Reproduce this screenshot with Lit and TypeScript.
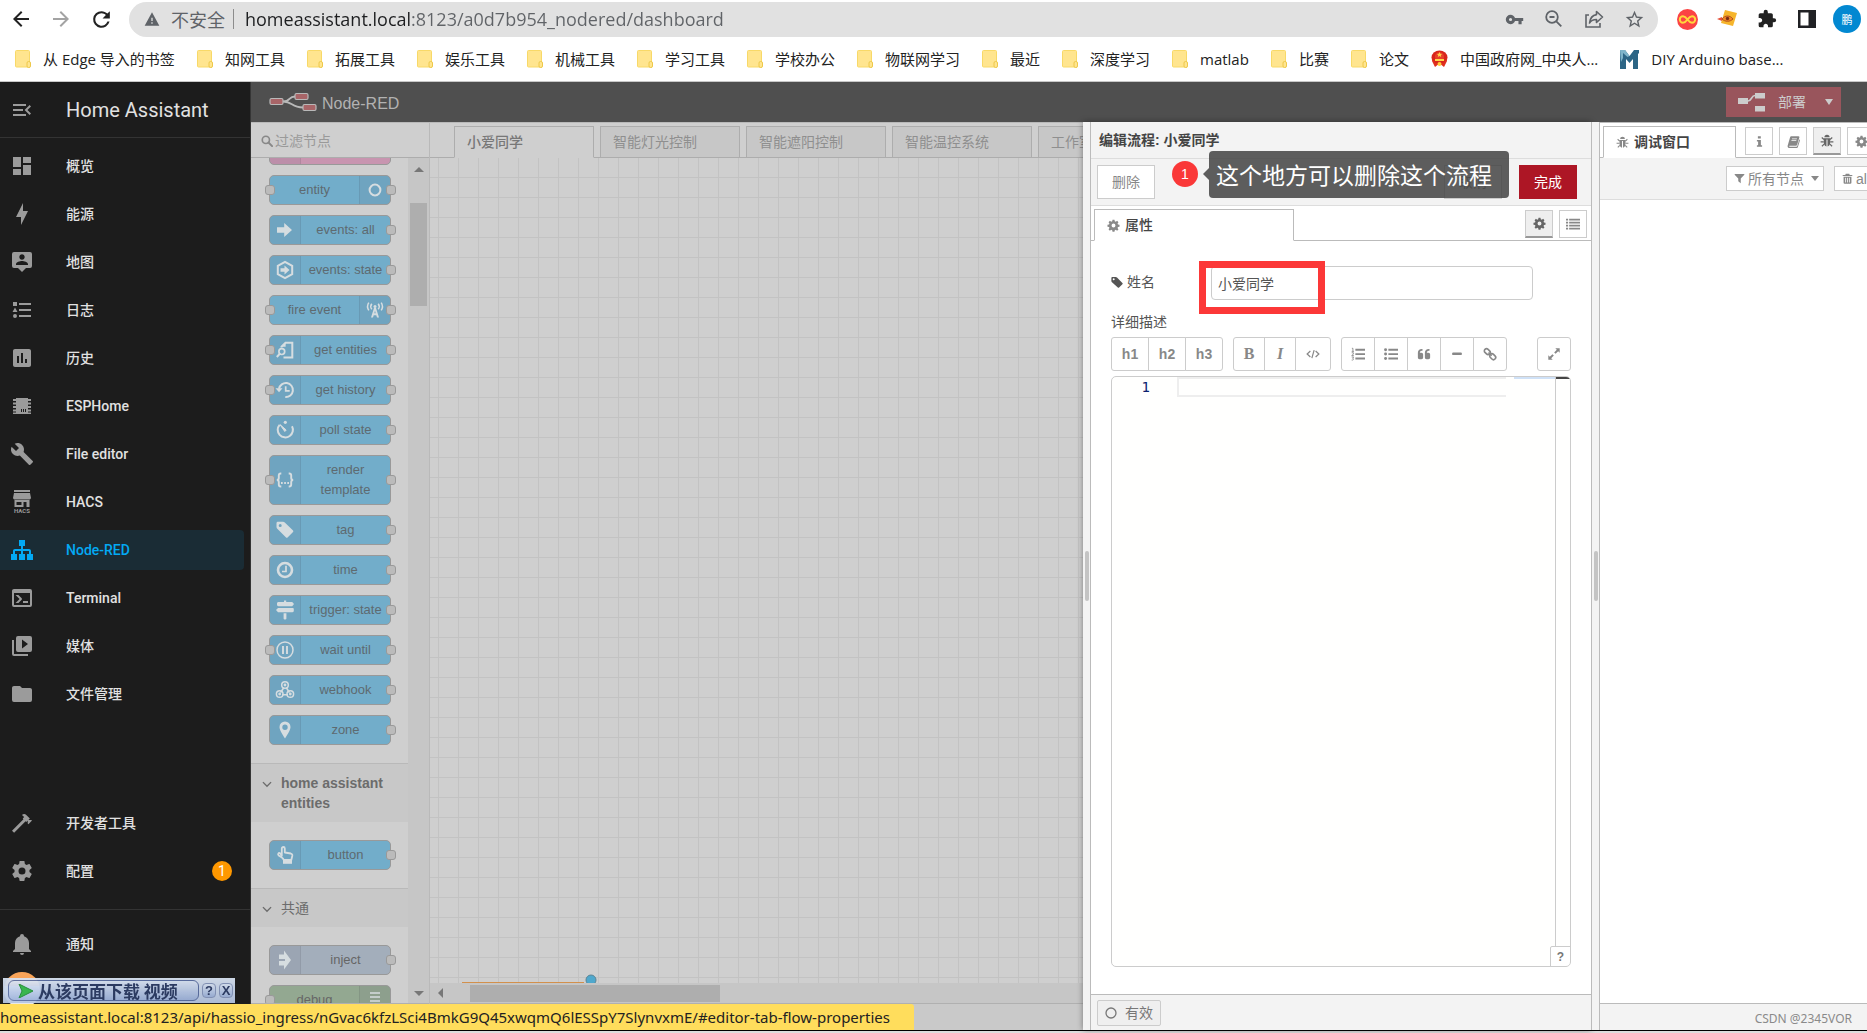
import { LitElement, html, css, svg, nothing, TemplateResult } from "lit";
import { customElement } from "lit/decorators.js";
import { classMap } from "lit/directives/class-map.js";

/* ---------- icons ---------- */

const MDI: Record<string, string> = {
  menuOpen: "M21,15.61L19.59,17L14.58,12L19.59,7L21,8.39L17.44,12L21,15.61M3,6H16V8H3V6M3,13V11H13V13H3M3,18V16H16V18H3Z",
  dashboard: "M13,3V9H21V3M13,21H21V11H13M3,21H11V15H3M3,13H11V3H3V13Z",
  bolt: "M11 15H6L13 1V9H18L11 23V15Z",
  map: "M20,2H4A2,2 0 0,0 2,4V16A2,2 0 0,0 4,18H8L12,22L16,18H20A2,2 0 0,0 22,16V4A2,2 0 0,0 20,2M12,4.3C13.5,4.3 14.7,5.5 14.7,7C14.7,8.5 13.5,9.7 12,9.7C10.5,9.7 9.3,8.5 9.3,7C9.3,5.5 10.5,4.3 12,4.3M18,15H6V14.1C6,12.1 10,11 12,11C14,11 18,12.1 18,14.1V15Z",
  log: "M5,9.5L7.5,14H2.5L5,9.5M3,4H7V8H3V4M5,20A2,2 0 0,0 7,18A2,2 0 0,0 5,16A2,2 0 0,0 3,18A2,2 0 0,0 5,20M9,5V7H21V5H9M9,19H21V17H9V19M9,13H21V11H9V13Z",
  chart: "M9 17H7V10H9V17M13 17H11V7H13V17M17 17H15V13H17V17M19 3H5C3.89 3 3 3.89 3 5V19C3 20.1 3.9 21 5 21H19C20.1 21 21 20.1 21 19V5C21 3.9 20.1 3 19 3Z",
  chip: "M6 4H18V5H21V7H18V8.5H21V10.5H18V12H21V14H18V15.500H21V17.500H18V18.500H21V20H3V18.500H6V17.500H3V15.500H6V14H3V12H6V10.500H3V8.500H6V7H3V5H6ZM11 15V18H12V15ZM13 15V18H14V15ZM15 15V18H16V15Z",
  wrench: "M22.7,19L13.6,9.9C14.5,7.6 14,4.9 12.1,3C10.1,1 7.1,0.6 4.7,1.7L9,6L6,9L1.6,4.7C0.4,7.1 0.9,10.1 2.9,12.1C4.8,14 7.5,14.5 9.8,13.6L18.9,22.7C19.3,23.1 19.9,23.1 20.3,22.7L22.6,20.4C23.1,20 23.1,19.3 22.7,19Z",
  sitemap: "M9,2V8H11V11H5C3.89,11 3,11.89 3,13V16H1V22H7V16H5V13H11V16H9V22H15V16H13V13H19V16H17V22H23V16H21V13C21,11.89 20.11,11 19,11H13V8H15V2H9Z",
  console: "M20,19V7H4V19H20M20,3A2,2 0 0,1 22,5V19A2,2 0 0,1 20,21H4A2,2 0 0,1 2,19V5C2,3.89 2.9,3 4,3H20M13,17V15H18V17H13M9.58,13L5.57,9H8.4L11.7,12.3C12.09,12.69 12.09,13.33 11.7,13.72L8.42,17H5.59L9.58,13Z",
  media: "M4,6H2V20A2,2 0 0,0 4,22H18V20H4V6M20,2H8A2,2 0 0,0 6,4V16A2,2 0 0,0 8,18H20A2,2 0 0,0 22,16V4A2,2 0 0,0 20,2M12,14.5V5.5L18,10L12,14.5Z",
  folder: "M10,4H4C2.89,4 2,4.89 2,6V18A2,2 0 0,0 4,20H20A2,2 0 0,0 22,18V8C22,6.89 21.1,6 20,6H12L10,4Z",
  hammer: "M2,19.63L13.43,8.2L12.72,7.5L14.14,6.07L12,3.89C13.2,2.7 15.09,2.7 16.27,3.89L19.87,7.5L18.45,8.91H21.29L22,9.62L18.45,13.21L17.74,12.5V9.62L16.27,11.04L15.56,10.33L4.13,21.76L2,19.63Z",
  cog: "M12,15.5A3.5,3.5 0 0,1 8.5,12A3.5,3.5 0 0,1 12,8.5A3.5,3.5 0 0,1 15.5,12A3.5,3.5 0 0,1 12,15.5M19.43,12.97C19.47,12.65 19.5,12.33 19.5,12C19.5,11.67 19.47,11.34 19.43,11L21.54,9.37C21.73,9.22 21.78,8.95 21.66,8.73L19.66,5.27C19.54,5.05 19.27,4.96 19.05,5.05L16.56,6.05C16.04,5.66 15.5,5.32 14.87,5.07L14.5,2.42C14.46,2.18 14.25,2 14,2H10C9.75,2 9.54,2.18 9.5,2.42L9.13,5.07C8.5,5.32 7.96,5.66 7.44,6.05L4.95,5.05C4.73,4.96 4.46,5.05 4.34,5.27L2.34,8.73C2.21,8.95 2.27,9.22 2.46,9.37L4.57,11C4.53,11.34 4.5,11.67 4.5,12C4.5,12.33 4.53,12.65 4.57,12.97L2.46,14.63C2.27,14.78 2.21,15.05 2.34,15.27L4.34,18.73C4.46,18.95 4.73,19.03 4.95,18.95L7.44,17.94C7.96,18.34 8.5,18.68 9.13,18.93L9.5,21.58C9.54,21.82 9.75,22 10,22H14C14.25,22 14.46,21.82 14.5,21.58L14.87,18.93C15.5,18.67 16.04,18.34 16.56,17.94L19.05,18.95C19.27,19.03 19.54,18.95 19.66,18.73L21.66,15.27C21.78,15.05 21.73,14.78 21.54,14.63L19.43,12.97Z",
  bell: "M21,19V20H3V19L5,17V11C5,7.9 7.03,5.17 10,4.29C10,4.19 10,4.1 10,4A2,2 0 0,1 12,2A2,2 0 0,1 14,4C14,4.1 14,4.19 14,4.29C16.97,5.17 19,7.9 19,11V17L21,19M14,21A2,2 0 0,1 12,23A2,2 0 0,1 10,21",
  puzzle: "M20.5,11H19V7C19,5.89 18.1,5 17,5H13V3.5A2.5,2.5 0 0,0 10.5,1A2.5,2.5 0 0,0 8,3.5V5H4A2,2 0 0,0 2,7V10.8H3.5C5,10.8 6.2,12 6.2,13.5C6.2,15 5,16.2 3.5,16.2H2V20A2,2 0 0,0 4,22H7.8V20.5C7.8,19 9,17.8 10.5,17.8C12,17.8 13.2,19 13.2,20.5V22H17A2,2 0 0,0 19,20V16H20.5A2.5,2.5 0 0,0 23,13.5A2.5,2.5 0 0,0 20.5,11Z",
  reload: "M17.65 6.35C16.2 4.9 14.21 4 12 4A8 8 0 1 0 19.73 14H17.65A6 6 0 1 1 12 6c1.66 0 3.14.69 4.22 1.78L13 11h7V4z",
  back: "M20 11H7.83l5.59-5.59L12 4l-8 8 8 8 1.41-1.41L7.83 13H20z",
  forward: "M4 11H16.17l-5.59-5.59L12 4l8 8-8 8-1.410-1.410L16.17 13H4z",
  star: "M12,15.39L8.24,17.66L9.23,13.38L5.91,10.5L10.29,10.13L12,6.09L13.71,10.13L18.09,10.5L14.77,13.38L15.76,17.66M22,9.24L14.81,8.63L12,2L9.19,8.63L2,9.24L7.45,13.97L5.82,21L12,17.27L18.18,21L16.54,13.97L22,9.24Z",
  key: "M7,14A2,2 0 0,1 5,12A2,2 0 0,1 7,10A2,2 0 0,1 9,12A2,2 0 0,1 7,14M12.65,10C11.83,7.67 9.61,6 7,6A6,6 0 0,0 1,12A6,6 0 0,0 7,18C9.61,18 11.83,16.33 12.65,14H17V18H21V14H23V10H12.65Z",
  warn: "M12 2L1 22H23L12 2M11 10H13V15H11V10M11 17H13V19H11V17Z",
};

const mdi = (name: string, size = 24) => html`
  <svg class="ic" width=${size} height=${size} viewBox="0 0 24 24" aria-hidden="true">
    <path fill="currentColor" fill-rule="evenodd" d=${MDI[name]}></path>
  </svg>`;

/* Small glyphs on a 16-unit grid. */
const GLYPH: Record<string, TemplateResult> = {
  search: svg`<circle cx="6.500" cy="6.500" r="4.800" fill="none" stroke="currentColor" stroke-width="2.200"/><path d="M10 10l4.800 4.800" stroke="currentColor" stroke-width="2.600" stroke-linecap="round"/>`,
  gear: svg`<path fill="currentColor" fill-rule="evenodd" d="M6.800 1h2.400l.4 1.900 1.200.5 1.700-1.100 1.600 1.700-1.100 1.600.5 1.200 1.900.4v2.300l-1.900.4-.5 1.200 1.100 1.700-1.700 1.600-1.600-1.100-1.200.5-.4 1.900H6.800l-.4-1.900-1.200-.5-1.700 1.100-1.600-1.700L3 11.100l-.5-1.200-1.900-.4V7.200l1.900-.4.5-1.200L1.900 3.900l1.700-1.600 1.600 1.100 1.200-.5zM8 5.600a2.400 2.400 0 100 4.800 2.400 2.400 0 000-4.800z"/>`,
  list: svg`<path fill="currentColor" d="M0 2h2.400v2H0zM3.600 2H16v2H3.600zM0 5.400h2.400v2H0zM3.600 5.400H16v2H3.600zM0 8.800h2.400v2H0zM3.600 8.800H16v2H3.600zM0 12.200h2.400v2H0zM3.600 12.200H16v2H3.600z"/>`,
  tag: svg`<path fill="currentColor" fill-rule="evenodd" d="M.5 2.500a1.200 1.200 0 011.200-1.200h4.600a2.600 2.600 0 011.700.7l7.200 7.200a1.200 1.200 0 010 1.700l-4.400 4.400a1.200 1.200 0 01-1.700 0L1.300 8.200A2.600 2.600 0 01.5 6.500zM3.600 3a1.300 1.300 0 100 2.600A1.300 1.300 0 003.600 3z"/>`,
  bug: svg`<path fill="currentColor" d="M5 3.800a3 3 0 016 0zM4.300 4.800h7.400v4.700c0 2.700-1.500 4.700-3.100 4.900V6.300H7.400v8.100c-1.600-.2-3.100-2.200-3.100-4.900z"/><path d="M4.500 6.300L2 4M4.300 9H.7M4.700 11.500L2.200 14M11.500 6.300L14 4M11.700 9h3.600M11.300 11.500l2.500 2.500" stroke="currentColor" stroke-width="1.300" fill="none"/>`,
  info: svg`<path fill="currentColor" d="M6 1.500h3.600v2.800H6zM4.800 6h4.900v6.500h1.500v2H4.800v-2h1.500V8H4.800z"/>`,
  book: svg`<path fill="currentColor" d="M5.500 1.500H14c1 0 1.500.7 1.200 1.600l-2.700 9c-.2.800-.8 1.200-1.600 1.200H3.600c-.7 0-1 .3-.8.700.1.300.5.400.9.400h7.800c.6 0 1-.3 1.200-.9l2.500-8.200c.6.400.8 1 .6 1.700l-2.400 7.800c-.3.900-1 1.500-2 1.500H3.300C1.600 16.300.3 14.800.8 13.300L3.700 3.100c.3-1 .9-1.600 1.800-1.600zM6.300 4.300L6 5.200h6l.3-.9zM5.600 6.600l-.3.900h6l.3-.9z" fill-rule="evenodd"/>`,
  filter: svg`<path fill="currentColor" d="M1 1.500h14v1L9.800 8v7L6.200 12V8L1 2.500z"/>`,
  trash: svg`<path fill="currentColor" fill-rule="evenodd" d="M5.500 1h5l.8 1.800H15V4.500H1V2.800h3.700zM2.300 5.300h11.400V14a1.500 1.500 0 01-1.500 1.500H3.800A1.500 1.500 0 012.300 14zM4.700 7v6.700h1.200V7zM7.400 7v6.700h1.200V7zM10.100 7v6.700h1.200V7z"/>`,
  ol: svg`<path fill="currentColor" d="M5 2h11v2.200H5zM5 7h11v2.200H5zM5 12h11v2.200H5z"/><path d="M1 1.500h1.200v3.500M.8 5h2.600M.8 6.600h2v1.300L.9 9.800h2.300M.8 11.400h2.200l-1 1.600c1.500.2 1.200 2.200-1.200 1.900" fill="none" stroke="currentColor"/>`,
  ul: svg`<path fill="currentColor" d="M5 2h11v2.200H5zM5 7h11v2.200H5zM5 12h11v2.200H5z"/><circle cx="1.800" cy="3.100" r="1.700" fill="currentColor"/><circle cx="1.800" cy="8.100" r="1.700" fill="currentColor"/><circle cx="1.800" cy="13.100" r="1.700" fill="currentColor"/>`,
  quote: svg`<path fill="currentColor" d="M1 6.500C1 4 2.800 2.200 5.500 2.200h.8v2h-.8C4.200 4.200 3.300 5 3.200 6.700H5c1.200 0 2 .8 2 2V12c0 1.200-.8 2-2 2H3c-1.200 0-2-.8-2-2zM9 6.500c0-2.500 1.800-4.300 4.500-4.300h.8v2h-.8c-1.300 0-2.200.8-2.300 2.500H13c1.200 0 2 .8 2 2V12c0 1.200-.8 2-2 2h-2c-1.200 0-2-.8-2-2z"/>`,
  minus: svg`<rect x="2.500" y="6.200" width="11" height="3" rx="1" fill="currentColor"/>`,
  link: svg`<g fill="none" stroke="currentColor" stroke-width="1.900"><rect x="1.200" y="2.800" width="7.400" height="5" rx="2.500" transform="rotate(45 4.900 5.300)"/><rect x="7.400" y="8.600" width="7.400" height="5" rx="2.500" transform="rotate(45 11.100 11.100)"/></g><path d="M6.300 6.300l3.600 3.600" stroke="currentColor" stroke-width="1.600"/>`,
  expand: svg`<path fill="currentColor" d="M9.500 1.500h5v5l-1.700-1.700-3 3-1.600-1.600 3-3zM6.500 14.500h-5v-5l1.700 1.700 3-3 1.600 1.600-3 3z"/>`,
  code: svg`<path d="M5 4.500L1.300 8 5 11.500M11 4.500L14.700 8 11 11.500M9.300 3.500L6.700 12.800" fill="none" stroke="currentColor" stroke-width="1.400"/>`,
  chevron: svg`<path d="M1.500 5L8 11.500 14.500 5" fill="none" stroke="currentColor" stroke-width="2.200"/>`,
};

const glyph = (name: string, size = 14) => html`
  <svg class="ic" width=${size} height=${size} viewBox="0 0 16 16" aria-hidden="true">${GLYPH[name]}</svg>`;

/* Icons of the palette nodes, on a 20-unit grid. */
const NODE_ICON: Record<string, TemplateResult> = {
  ring: svg`<circle cx="10" cy="10" r="5.400" fill="none" stroke="currentColor" stroke-width="2"/>`,
  arrow: svg`<path fill="currentColor" d="M2 7.200h7.200V3L17 10l-7.800 7V12.800H2z"/>`,
  hex: svg`<path d="M10 1.800l7.200 4.100v8.200L10 18.200l-7.200-4.100V5.900z" fill="none" stroke="currentColor" stroke-width="2"/><path fill="currentColor" d="M5.500 8.300h4V5.600l5 4.400-5 4.400v-2.700h-4z"/>`,
  tower: svg`<path fill="currentColor" d="M9 8h2l3 9.500h-2l-.7-2.300H8.700L8 17.500H6zM9.300 13.300h1.400L10 10.700z" fill-rule="evenodd"/><circle cx="10" cy="6.600" r="1.500" fill="currentColor"/><path d="M6.800 3.800a4.500 4.500 0 000 5.500M13.200 3.800a4.500 4.500 0 010 5.500M3.800 2.700a7 7 0 000 7.700M16.200 2.700a7 7 0 010 7.700" fill="none" stroke="currentColor" stroke-width="1.500"/>`,
  doc: svg`<path d="M6.500 7.500V6.700l4-4h6.800V17.500H8.500" fill="none" stroke="currentColor" stroke-width="2"/><path d="M6.500 6.800l4.100-4.400v4.400z" fill="currentColor"/><circle cx="6.800" cy="11.600" r="2.900" fill="none" stroke="currentColor" stroke-width="1.700"/><path d="M4.800 13.800L1.800 17" stroke="currentColor" stroke-width="2"/>`,
  history: svg`<path d="M4 8.800A7 7 0 1110.300 17" fill="none" stroke="currentColor" stroke-width="2"/><path fill="currentColor" d="M.5 8.300h7L4 12.300z"/><path d="M10.700 6.300v4.500h4" fill="none" stroke="currentColor" stroke-width="1.700"/>`,
  timer: svg`<path d="M4.600 4.800A7.600 7.600 0 1017 6.200" fill="none" stroke="currentColor" stroke-width="2"/><path d="M5 4.600l6.200 5.400-1.400 1.500z" fill="currentColor" stroke="currentColor"/><circle cx="10.300" cy="2.300" r="1.600" fill="currentColor"/>`,
  braces: svg`<path d="M6.300 3.500H5.700c-1.500 0-1.900.7-1.900 2V8c0 1.200-.6 2-2 2 1.400 0 2 .8 2 2v2.500c0 1.300.4 2 1.900 2h.6M13.700 3.500h.6c1.500 0 1.900.7 1.900 2V8c0 1.200.6 2 2 2-1.400 0-2 .8-2 2v2.500c0 1.300-.4 2-1.900 2h-.6" fill="none" stroke="currentColor" stroke-width="1.900"/><path d="M6 13h1.700M9.200 13h1.700M12.300 13H14" stroke="currentColor" stroke-width="1.800"/>`,
  tag: svg`<path fill="currentColor" fill-rule="evenodd" d="M1.500 3.200c0-1 .5-1.500 1.500-1.500h5c.7 0 1.300.3 1.800.8l8 7.800c.7.700.7 1.300 0 2l-5 5c-.7.700-1.300.7-2 0l-8.500-8.500c-.5-.5-.8-1-.8-1.800zM5.200 4a1.500 1.500 0 100 3 1.500 1.500 0 000-3z"/>`,
  clock: svg`<circle cx="10" cy="10" r="7" fill="none" stroke="currentColor" stroke-width="2.600"/><path d="M11 5.800v5.700H7" fill="none" stroke="currentColor" stroke-width="1.700"/>`,
  signs: svg`<path fill="currentColor" d="M9 .5h2.200V2h6l1.800 2-1.800 2.200H3.500C2.600 6.200 2 5.600 2 4.800V3.500C2 2.600 2.600 2 3.500 2H9zM3 8h14.500c.9 0 1.300.5 1.300 1.300v1.500c0 .8-.4 1.400-1.300 1.400H3L1 10zM8.600 13.300h2.800v5.200c0 1.300-2.800 1.300-2.800 0z"/>`,
  pause: svg`<circle cx="10" cy="10" r="8" fill="none" stroke="currentColor" stroke-width="1.500"/><path d="M8 6v8M12 6v8" stroke="currentColor" stroke-width="1.900"/>`,
  webhook: svg`<g fill="none" stroke="currentColor" stroke-width="1.500"><circle cx="10" cy="5" r="3.300"/><circle cx="4.700" cy="14" r="3.300"/><circle cx="15.300" cy="14" r="3.300"/><path d="M9 7.500l-3.500 5M11.200 7.500l3.200 5M7 14.700h6"/></g><g fill="currentColor"><circle cx="10" cy="5" r="1.400"/><circle cx="4.700" cy="14" r="1.400"/><circle cx="15.300" cy="14" r="1.400"/></g>`,
  pin: svg`<path fill="currentColor" fill-rule="evenodd" d="M10 1.500a5.500 5.500 0 015.500 5.500c0 3-3.500 8.500-5.500 11.500C8 15.500 4.500 10 4.500 7A5.500 5.500 0 0110 1.500zM10 4.500a2.700 2.700 0 100 5.400 2.700 2.700 0 000-5.400z"/>`,
  hand: svg`<path d="M6.800 10.800V3.500c0-2 3-2 3 0v4l6 1c1.200.3 1.700 1 1.500 2.200l-1 4.300H8.800c-.5-2-2.500-2.800-5-4.500-1.500-1.200-.3-3 1.300-2.300z" fill="none" stroke="currentColor" stroke-width="1.800" stroke-linejoin="round"/><path fill="currentColor" d="M8 15h9v3.800H8z"/>`,
  inject: svg`<path fill="currentColor" d="M4 4.500h5V.5L16 10 9 19.500v-4H4V11h6V9H4z"/>`,
  lines: svg`<path d="M5 3h10M5 7h10M5 11h10M5 15h10" stroke="currentColor" stroke-width="1.700"/>`,
};

const CJK = css`"Noto Sans CJK SC"`;

const shared = css`
  *, *::before, *::after { box-sizing: border-box; }
  .ic { display: block; flex: none; }
  button { font: inherit; color: inherit; padding: 0; margin: 0; cursor: pointer; }
  a { color: inherit; text-decoration: none; }
`;

/* ---------- browser chrome ---------- */

@customElement("browser-bar")
class BrowserBar extends LitElement {
  static styles = [shared, css`
    :host { display: block; background: #fff; border-bottom: 1px solid #c8c8c8; font-family: "Open Sans", ${CJK}, sans-serif; color: #222; }
    .nav { display: flex; align-items: center; height: 37px; padding: 1px 0 0 6px; }
    .nav button { border: 0; background: none; display: grid; place-items: center; width: 40px; height: 36px; flex: none; }
    .back { margin-left: -5px; }
    .nav .off { color: #a3a3a3; }
    .pill { flex: 1; min-width: 0; display: flex; align-items: center; height: 35px; margin: 0 9px 0 8px; padding: 0 4px 0 15px; border-radius: 18px; background: #e1e1e1; color: #5f6368; }
    .insecure { margin-left: 11px; font-size: 18px; white-space: nowrap; }
    .bar { width: 1px; height: 20px; background: #8c8c8c; margin: 0 11px 0 8px; flex: none; }
    .url { flex: 1; min-width: 0; border: 0; padding: 0; outline: none; font-family: inherit; font-size: 18px; color: #606367;
      background: linear-gradient(to right, #1d1e20 165px, #606367 165px); -webkit-background-clip: text; background-clip: text; -webkit-text-fill-color: transparent; }
    .ext { display: flex; }
    .avatar { width: 28px; height: 28px; border-radius: 50%; background: #0288d1; color: #fff; font-size: 11px; display: grid; place-items: center; line-height: 1; }
    .marks { display: flex; align-items: center; gap: 22px; height: 44px; padding: 0 15px; font-size: 15px; line-height: 24px; white-space: nowrap; overflow: hidden; }
    .mark { display: flex; align-items: center; gap: 12px; }
  `];

  private marks: [string, string][] = [
    ["folder", "从 Edge 导入的书签"], ["folder", "知网工具"], ["folder", "拓展工具"], ["folder", "娱乐工具"],
    ["folder", "机械工具"], ["folder", "学习工具"], ["folder", "学校办公"], ["folder", "物联网学习"],
    ["folder", "最近"], ["folder", "深度学习"], ["folder", "matlab"], ["folder", "比赛"], ["folder", "论文"],
    ["gov", "中国政府网_中央人..."], ["diy", "DIY Arduino base..."],
  ];

  private markIcon(kind: string) {
    if (kind === "gov") return html`<svg class="ic" width="17" height="18" viewBox="0 0 17 18"><ellipse cx="8.500" cy="7.500" rx="8" ry="7" fill="#d8261c"/><circle cx="8.500" cy="6.800" r="4.600" fill="#e8402a"/><path d="M8.500 2l.8 1.700 1.900.2-1.400 1.200.4 1.800-1.700-.9-1.700.9.4-1.800-1.400-1.200 1.900-.2zM4 9h9v2H4z" fill="#ffd54a"/><path d="M1.500 8c1 4 4 6 7 6s6-2 7-6l.5 3-3 6-2.500-2h-4L4 17l-3-6z" fill="#e0301e"/><circle cx="8.500" cy="14" r="2" fill="#ffcf3a"/></svg>`;
    if (kind === "diy") return html`<svg class="ic" width="19" height="19" viewBox="0 0 19 19"><path d="M0 0h5l4.500 6L14 0h5v3l-1 1v15h-5V9l-3.500 4L6 9v10H0V4z" fill="#2c6585"/><path d="M0 0h5l4.500 6-2 1L3 3v5L1 12z" fill="#7fb4c9"/></svg>`;
    return html`<svg class="ic" width="16" height="18" viewBox="0 0 16 18"><path d="M1.500.5h12a1 1 0 011 1v15.500h-13a1 1 0 01-1-1V1.500a1 1 0 011-1z" fill="#ffe58f" stroke="#f8d968"/><rect x="12" y="11.500" width="3.500" height="6" rx="1.500" fill="#ffe58f" stroke="#eec84a"/></svg>`;
  }

  render() {
    return html`
      <div class="nav">
        <button class="back" aria-label="Back">${mdi("back", 24)}</button>
        <button class="off" aria-label="Forward">${mdi("forward", 24)}</button>
        <button aria-label="Reload">${mdi("reload", 25)}</button>
        <div class="pill">
          ${mdi("warn", 16)}
          <span class="insecure">不安全</span><span class="bar"></span>
          <input class="url" aria-label="Address" value="homeassistant.local:8123/a0d7b954_nodered/dashboard">
          <button aria-label="Passwords">${mdi("key", 19)}</button>
          <button aria-label="Zoom"><svg class="ic" width="20" height="20" viewBox="0 0 20 20" fill="none" stroke="currentColor" stroke-width="1.800"><circle cx="8" cy="8" r="5.800"/><path d="M5.500 8h5M12.300 12.300l5 5"/></svg></button>
          <button aria-label="Share"><svg class="ic" width="20" height="20" viewBox="0 0 20 20" fill="none" stroke="currentColor" stroke-width="1.600"><path d="M5 6H2v12h14v-4"/><path d="M12.500 2.500L18.500 8l-6 5.500V10.500C9 10.500 7 11.500 5.500 14 6 9.500 8.500 6.300 12.500 5.600z" stroke-linejoin="round"/></svg></button>
          <button aria-label="Bookmark">${mdi("star", 21)}</button>
        </div>
        <div class="ext">
          <button aria-label="Loop extension"><svg class="ic" width="21" height="21" viewBox="0 0 21 21"><circle cx="10.500" cy="10.500" r="10.500" fill="#fb4444"/><path d="M10.500 10.500C8.500 7.700 7.300 7.300 6 7.300a3.200 3.200 0 000 6.400c1.300 0 2.500-.4 4.500-3.200 2-2.800 3.200-3.200 4.500-3.200a3.200 3.200 0 010 6.400c-1.300 0-2.500-.4-4.500-3.200z" fill="none" stroke="#ffd83b" stroke-width="2"/></svg></button>
          <button aria-label="Eye extension"><svg class="ic" width="21" height="20" viewBox="0 0 21 20"><path d="M8 1l12 3-4 13-12-3z" fill="#f6b52c"/><path d="M0 10l5-2v4z" fill="#e5533d"/><path d="M5 10c3-4 8-4 11 0-3 3-8 3-11 0z" fill="#f08a24" stroke="#b4501e"/><circle cx="10.500" cy="9.500" r="1.700" fill="#7a2d16"/></svg></button>
          <button aria-label="Extensions">${mdi("puzzle", 20)}</button>
          <button aria-label="Side panel"><svg class="ic" width="18" height="18" viewBox="0 0 18 18"><path fill="#202124" fill-rule="evenodd" d="M0 0h18v18H0zM2.500 2.500v13h8v-13z"/></svg></button>
          <button aria-label="Profile"><span class="avatar">鹏</span></button>
        </div>
      </div>
      <nav class="marks">
        ${this.marks.map(([kind, text]) => html`<a class="mark" href="#">${this.markIcon(kind)}<span>${text}</span></a>`)}
      </nav>`;
  }
}

/* ---------- Home Assistant sidebar ---------- */

interface NavItem { icon: string; text: string; active?: boolean; badge?: string }

@customElement("ha-nav")
class HaNav extends LitElement {
  static styles = [shared, css`
    :host { display: flex; flex-direction: column; width: 251px; flex: none; background: #1c1c1c; border-right: 1px solid #353535; color: #e1e1e1;
      font: 500 14px/20px Roboto, ${CJK}, sans-serif; overflow: hidden; }
    .head { display: flex; align-items: center; gap: 32px; height: 56px; padding: 0 10px; border-bottom: 1px solid #333; font-size: 20px; font-weight: 400; flex: none; }
    .head button { border: 0; background: none; color: #9b9b9b; }
    .items { display: flex; flex-direction: column; gap: 8px; padding: 8px 6px 0 0; }
    .grow { flex: 1; }
    .item { display: flex; align-items: center; gap: 32px; height: 40px; padding: 0 12px 0 10px; border-radius: 0 4px 4px 0; }
    .item .ic { color: #9b9b9b; }
    .active { background: #1a2c35; color: #03a9f4; }
    .active .ic { color: #03a9f4; }
    .badge { margin-left: auto; width: 20px; height: 20px; border-radius: 50%; background: #ff9800; color: #fff; display: grid; place-items: center; font-weight: 400; }
    .sep { border-top: 1px solid #333; margin-top: 18px; padding-top: 14px; }
    .user { height: 66px; padding: 8px 0 0 4px; }
    .face { width: 36px; height: 36px; border-radius: 50%; background: linear-gradient(#f9a458 14px, #e8e8e8 14px); }
  `];

  private main: NavItem[] = [
    { icon: "dashboard", text: "概览" }, { icon: "bolt", text: "能源" }, { icon: "map", text: "地图" },
    { icon: "log", text: "日志" }, { icon: "chart", text: "历史" }, { icon: "chip", text: "ESPHome" },
    { icon: "wrench", text: "File editor" }, { icon: "hacs", text: "HACS" },
    { icon: "sitemap", text: "Node-RED", active: true }, { icon: "console", text: "Terminal" },
    { icon: "media", text: "媒体" }, { icon: "folder", text: "文件管理" },
  ];
  private tools: NavItem[] = [{ icon: "hammer", text: "开发者工具" }, { icon: "cog", text: "配置", badge: "1" }];

  private icon(name: string) {
    if (name !== "hacs") return mdi(name);
    return html`<svg class="ic" width="24" height="24" viewBox="0 0 24 24"><path fill="currentColor" fill-rule="evenodd" d="M4 0h16v2H4zM4 3h16l1 5c-.5 1-1 1.500-2 1.500H5C4 9.500 3.500 9 3 8zM4.500 10h15v7h-3v-5h-3v5h-9zM6.500 12v3h5v-3z"/><text x="12" y="23" text-anchor="middle" font-size="6" font-weight="700" fill="currentColor">HACS</text></svg>`;
  }

  private item = (n: NavItem) => html`
    <a href="#" class=${classMap({ item: true, active: !!n.active })}>
      ${this.icon(n.icon)}<span>${n.text}</span>${n.badge ? html`<span class="badge">${n.badge}</span>` : nothing}
    </a>`;

  render() {
    return html`
      <div class="head"><button aria-label="Toggle sidebar">${mdi("menuOpen")}</button><span>Home Assistant</span></div>
      <nav class="items">${this.main.map(this.item)}</nav>
      <div class="grow"></div>
      <nav class="items">${this.tools.map(this.item)}</nav>
      <div class="sep"><nav>${this.item({ icon: "bell", text: "通知" })}</nav></div>
      <div class="user"><div class="face"></div></div>`;
  }
}

/* ---------- node palette ---------- */

interface PaletteNode { label: string; icon: string; input?: boolean; output?: boolean; right?: boolean; tone?: string }

@customElement("node-palette")
class NodePalette extends LitElement {
  static styles = [shared, css`
    :host { display: flex; flex-direction: column; width: 179px; flex: none; border-right: 1px solid #b9b9b9; background: #cfcfcf; color: #666; overflow: hidden; }
    .search { display: flex; align-items: center; gap: 2px; height: 36px; padding: 2px 10px 0; border-bottom: 1px solid #adadad; border-top: 1px solid #b9b9b9; color: #888; flex: none; }
    .search input { min-width: 0; flex: 1; border: 0; padding: 0; outline: none; background: none; font: 14px/20px "Liberation Sans", ${CJK}, sans-serif; color: #666; }
    .search input::placeholder { color: #9a9a9a; }
    .body { flex: 1; min-height: 0; display: flex; }
    .list { flex: 1; min-width: 0; overflow: hidden; }
    .group { display: flex; flex-direction: column; gap: 10px; padding: 18px 17px 18px 18px; }
    .first { margin-top: -41px; }
    .cat { width: 100%; display: flex; align-items: flex-start; gap: 9px; padding: 9px 10px 9px 11px; border: 0; border-top: 1px solid #b9b9b9; background: #c8c8c8; text-align: left; font-size: 14px; line-height: 20px; font-weight: 700; color: #6c6c6c; }
    .cat .ic { margin-top: 6px; }
    .plain { font-weight: 400; }
    .node { position: relative; display: flex; min-height: 30px; border: 1px solid #999; border-radius: 5px; background: #72adca; color: #5e6a70; font-size: 13px; line-height: 20px; }
    .node.inject { background: #a3aebb; color: #666; }
    .node.debug { background: #93a891; color: #666; }
    .node.pink { background: #c895b0; }
    .side { display: grid; place-items: center; width: 31px; color: #d6dde0; background: rgba(90, 90, 110, .1); border-right: 1px solid rgba(0, 0, 0, .06); border-radius: 4px 0 0 4px; flex: none; }
    .right { flex-direction: row-reverse; }
    .right .side { border-right: 0; border-left: 1px solid rgba(0, 0, 0, .06); border-radius: 0 4px 4px 0; }
    .label { flex: 1; align-self: center; text-align: center; padding: 4px 6px; }
    .port { position: absolute; top: 50%; width: 10px; height: 10px; margin-top: -5px; border: 1px solid #999; border-radius: 3px; background: #bbb; }
    .in { left: -5px; }
    .out { right: -6px; }
    .scroll { width: 21px; background: #c6c6c6; display: flex; flex-direction: column; align-items: center; padding: 9px 0 7px; flex: none; }
    .thumb { width: 17px; height: 103px; margin-top: 31px; background: #aeaeae; }
    .up { border: 5px solid transparent; border-top: 0; border-bottom-color: #777; }
    .down { border: 5px solid transparent; border-bottom: 0; border-top-color: #777; margin-top: auto; }
    .foot { height: 27px; border-top: 1px solid #b0b0b0; background: #c9c9c9; flex: none; }
  `];

  private home: PaletteNode[] = [
    { label: "", icon: "arrow", tone: "pink" },
    { label: "entity", icon: "ring", input: true, output: true, right: true },
    { label: "events: all", icon: "arrow", output: true },
    { label: "events: state", icon: "hex", output: true },
    { label: "fire event", icon: "tower", input: true, output: true, right: true },
    { label: "get entities", icon: "doc", input: true, output: true },
    { label: "get history", icon: "history", input: true, output: true },
    { label: "poll state", icon: "timer", output: true },
    { label: "render template", icon: "braces", input: true, output: true },
    { label: "tag", icon: "tag", output: true },
    { label: "time", icon: "clock", output: true },
    { label: "trigger: state", icon: "signs", output: true },
    { label: "wait until", icon: "pause", input: true, output: true },
    { label: "webhook", icon: "webhook", output: true },
    { label: "zone", icon: "pin", output: true },
  ];
  private entities: PaletteNode[] = [{ label: "button", icon: "hand", output: true }];
  private common: PaletteNode[] = [
    { label: "inject", icon: "inject", output: true, tone: "inject" },
    { label: "debug", icon: "lines", input: true, right: true, tone: "debug" },
  ];

  private node = (n: PaletteNode) => html`
    <div class=${classMap({ node: true, right: !!n.right, [n.tone ?? "ha"]: true })}>
      <span class="side"><svg class="ic" width="20" height="20" viewBox="0 0 20 20">${NODE_ICON[n.icon]}</svg></span>
      <span class="label">${n.label}</span>
      ${n.input ? html`<i class="port in"></i>` : nothing}
      ${n.output ? html`<i class="port out"></i>` : nothing}
    </div>`;

  render() {
    return html`
      <label class="search">${glyph("search", 12)}<input type="search" placeholder="过滤节点" aria-label="过滤节点"></label>
      <div class="body">
        <div class="list">
          <div class="group first">${this.home.map(this.node)}</div>
          <button class="cat">${glyph("chevron", 10)}<span>home assistant entities</span></button>
          <div class="group">${this.entities.map(this.node)}</div>
          <button class="cat plain">${glyph("chevron", 10)}<span>共通</span></button>
          <div class="group">${this.common.map(this.node)}</div>
        </div>
        <div class="scroll"><i class="up"></i><i class="thumb"></i><i class="down"></i></div>
      </div>
      <div class="foot"></div>`;
  }
}

/* ---------- flow workspace ---------- */

@customElement("flow-workspace")
class FlowWorkspace extends LitElement {
  static styles = [shared, css`
    :host { display: flex; flex-direction: column; flex: 1; min-width: 0; background: #cfcfcf; overflow: hidden; }
    .tabs { display: flex; gap: 6px; height: 36px; padding: 3px 0 0 24px; border-top: 1px solid #b9b9b9; box-shadow: inset 0 -1px #adadad; flex: none; overflow: hidden; }
    .tab { width: 140px; flex: none; border: 1px solid #adadad; background: #c7c7c7; color: #8f8f8f; text-align: left; padding: 0 12px; font-size: 14px; line-height: 28px; white-space: nowrap; overflow: hidden; }
    .on { background: #cfcfcf; border-bottom-color: #cfcfcf; color: #777; font-weight: 500; }
    .canvas { position: relative; flex: 1; min-height: 0;
      background: linear-gradient(to right, #c3c3c3 1px, transparent 1px) 8px 0 / 20px 20px, linear-gradient(#c3c3c3 1px, transparent 1px) 0 19px / 20px 20px; }
    .wire { position: absolute; left: 30px; bottom: 0; }
    .scroll { display: flex; align-items: center; height: 20px; background: #c6c6c6; padding-left: 8px; flex: none; }
    .left { border: 5px solid transparent; border-left: 0; border-right-color: #777; }
    .thumb { width: 250px; height: 17px; margin-left: 27px; background: #aeaeae; }
    .foot { height: 27px; border-top: 1px solid #b0b0b0; background: #c9c9c9; flex: none; }
  `];

  private tabs = ["小爱同学", "智能灯光控制", "智能遮阳控制", "智能温控系统", "工作室环境"];

  render() {
    return html`
      <div class="tabs" role="tablist">
        ${this.tabs.map((t, i) => html`<button role="tab" class=${classMap({ tab: true, on: i === 0 })}>${t}</button>`)}
      </div>
      <div class="canvas">
        <svg class="wire" width="140" height="9" viewBox="0 0 140 9"><path d="M2 8.500h122" stroke="#d2904c" stroke-width="1.200"/><circle cx="131" cy="6" r="5" fill="#4fa8cd" stroke="#5b8596"/></svg>
      </div>
      <div class="scroll"><i class="left"></i><i class="thumb"></i></div>
      <div class="foot"></div>`;
  }
}

/* ---------- flow edit tray ---------- */

@customElement("edit-tray")
class EditTray extends LitElement {
  static styles = [shared, css`
    :host { display: flex; width: 508px; flex: none; color: #555; font-size: 14px; line-height: 20px; box-shadow: 0 0 6px rgba(0, 0, 0, .4); z-index: 1; }
    .grip { width: 8px; flex: none; background: #f3f3f3; border-right: 1px solid #bbb; display: flex; align-items: center; justify-content: center; }
    .grip::after { content: ""; width: 4px; height: 50px; border-radius: 2px; background: #c4c4c4; }
    .tray { flex: 1; min-width: 0; display: flex; flex-direction: column; background: #fff; }
    .title { height: 37px; padding: 8px 8px; background: #f3f3f3; border-bottom: 1px solid #ddd; font-weight: 700; color: #444; flex: none; }
    .title h2 { margin: 0; font: inherit; }
    .bar { position: relative; display: flex; gap: 17px; height: 47px; padding: 6px 14px 6px 6px; background: #f3f3f3; border-bottom: 1px solid #ddd; flex: none; }
    .bar button { width: 58px; height: 34px; border: 1px solid #ccc; background: #fff; color: #888; }
    .bar .cancel { margin-left: auto; }
    .bar .done { background: #ad1625; border-color: #ad1625; color: #fff; }
    .step { position: absolute; left: 81px; top: 2px; width: 26px; height: 26px; border-radius: 50%; background: #fa3838; color: #fff; display: grid; place-items: center; }
    .tip { position: absolute; left: 118px; top: -8px; height: 47px; padding: 0 17px 0 7px; border-radius: 4px; background: rgba(64, 64, 64, .84); color: #fff; font: 23px/47px ${CJK}, sans-serif; white-space: nowrap; }
    .tip::before { content: ""; position: absolute; left: -6px; top: 17px; border: 6px solid transparent; border-left: 0; border-right-color: rgba(64, 64, 64, .84); }
    .tabs { display: flex; align-items: flex-start; height: 35px; padding: 3px 4px 0 3px; box-shadow: inset 0 -1px #bbb; flex: none; }
    .tab { display: flex; align-items: center; gap: 5px; width: 200px; height: 32px; padding: 0 12px; border: 1px solid #bbb; border-bottom-color: #fff; background: #fff; color: #444; font-weight: 500; }
    .tab .ic { color: #888; }
    .sq { display: grid; place-items: center; width: 28px; height: 28px; margin: 1px 0 0 6px; border: 1px solid #ccc; background: #fff; color: #888; }
    .pressed { background: #efefef; border-bottom: 2px solid #999; color: #666; }
    .push { margin-left: auto; }
    .form { flex: 1; min-height: 0; display: flex; flex-direction: column; padding: 25px 20px 27px; }
    .row { display: flex; align-items: center; }
    .row label { display: flex; align-items: center; gap: 4px; width: 100px; margin-top: -3px; flex: none; }
    .field { position: relative; width: 322px; display: flex; }
    .field input { width: 100%; height: 34px; border: 1px solid #ccc; border-radius: 4px; padding: 0 6px; color: #555; font: inherit; outline: none; background: #fff; }
    .mark { position: absolute; left: -12px; top: -5px; width: 126px; height: 53px; border: 7px solid #fc3838; pointer-events: none; }
    .desc { margin-top: 12px; }
    .tools { display: flex; gap: 10px; margin-top: 5px; color: #888; flex: none; }
    .set { display: flex; }
    .set button { display: grid; place-items: center; height: 34px; border: 1px solid #ccc; background: #fff; min-width: 34px; margin-left: -1px; padding: 0 8px; }
    .set button:first-child { margin-left: 0; border-radius: 3px 0 0 3px; }
    .set button:last-child { border-radius: 0 3px 3px 0; }
    .set .h { font-weight: 700; width: 38px; padding: 0; }
    .set .nar { min-width: 30px; padding: 0; width: 32px; font-family: "Liberation Serif", serif; font-size: 16px; }
    .set .it { font-style: italic; }
    .set .code-btn { width: 36px; }
    .far { margin-left: auto; }
    .far button:first-child { border-radius: 3px; }
    .editor { position: relative; flex: 1; min-height: 120px; margin-top: 5px; border: 1px solid #ccc; border-radius: 5px; background: #fffffe; display: flex; overflow: hidden; }
    .gutter { width: 65px; padding-top: 1px; flex: none; text-align: right; padding-right: 27px; color: #0b216f; font: 14px/18px "DejaVu Sans Mono", monospace; }
    .code { flex: 1; min-width: 0; height: 20px; margin: 0; border: 2px solid #eee; border-right: 0; border-radius: 0; resize: none; outline: none; padding: 0; background: none; overflow: hidden; font: 14px/16px "Liberation Mono", monospace; }
    .minimap { width: 50px; flex: none; padding-left: 8px; border-right: 1px solid #ccc; }
    .minimap i { display: block; height: 2px; background: #cfe1f7; }
    .ruler { width: 14px; flex: none; }
    .ruler i { display: block; height: 2px; background: #444; }
    .help { position: absolute; right: -1px; bottom: -1px; width: 21px; height: 21px; border: 1px solid #ccc; border-radius: 2px 0 5px 0; background: #fff; color: #777; font-size: 12px; line-height: 18px; font-weight: 700; }
    .foot { display: flex; align-items: center; height: 36px; padding: 0 6px; border-top: 1px solid #bbb; background: #f3f3f3; flex: none; }
    .valid { display: flex; align-items: center; gap: 8px; height: 26px; padding: 0 7px; border: 1px solid #ccc; border-radius: 2px; background: #efefef; color: #777; }
  `];

  render() {
    return html`
      <div class="grip"></div>
      <section class="tray">
        <div class="title"><h2>编辑流程: 小爱同学</h2></div>
        <div class="bar">
          <button>删除</button>
          <button class="cancel">取消</button>
          <button class="done">完成</button>
          <span class="step">1</span>
          <span class="tip" role="tooltip">这个地方可以删除这个流程</span>
        </div>
        <div class="tabs">
          <button class="tab">${glyph("gear", 13)}属性</button>
          <button class="sq pressed push" aria-label="属性">${glyph("gear", 13)}</button>
          <button class="sq" aria-label="列表">${glyph("list", 14)}</button>
        </div>
        <div class="form">
          <div class="row">
            <label for="name">${glyph("tag", 12)}姓名</label>
            <div class="field"><input id="name" type="text" value="小爱同学"><i class="mark"></i></div>
          </div>
          <label class="desc" for="info">详细描述</label>
          <div class="tools">
            <div class="set"><button class="h">h1</button><button class="h">h2</button><button class="h">h3</button></div>
            <div class="set"><button class="nar"><b>B</b></button><button class="nar it"><b>I</b></button><button class="code-btn" aria-label="Code">${glyph("code", 14)}</button></div>
            <div class="set">
              <button aria-label="Ordered list">${glyph("ol")}</button><button aria-label="List">${glyph("ul")}</button><button aria-label="Quote">${glyph("quote")}</button><button aria-label="Rule">${glyph("minus")}</button><button aria-label="Link">${glyph("link")}</button>
            </div>
            <div class="set far"><button aria-label="Expand">${glyph("expand")}</button></div>
          </div>
          <div class="editor">
            <span class="gutter">1</span>
            <textarea id="info" class="code" rows="1"></textarea>
            <div class="minimap"><i></i></div>
            <div class="ruler"><i></i></div>
            <button class="help" aria-label="Help">?</button>
          </div>
        </div>
        <div class="foot"><button class="valid"><svg class="ic" width="12" height="12" viewBox="0 0 12 12"><circle cx="6" cy="6" r="5" fill="none" stroke="currentColor" stroke-width="1.300"/></svg>有效</button></div>
      </section>`;
  }
}

/* ---------- debug sidebar ---------- */

@customElement("debug-panel")
class DebugPanel extends LitElement {
  static styles = [shared, css`
    :host { display: flex; width: 276px; flex: none; color: #555; font-size: 14px; line-height: 20px; overflow: hidden; z-index: 2; }
    .grip { width: 9px; flex: none; background: #f3f3f3; border-left: 1px solid #bbb; border-right: 1px solid #bbb; display: flex; align-items: center; justify-content: center; }
    .grip::after { content: ""; width: 4px; height: 50px; border-radius: 2px; background: #c4c4c4; flex: none; }
    .panel { flex: 1; min-width: 0; display: flex; flex-direction: column; background: #fff; }
    .tabs { display: flex; align-items: flex-start; height: 36px; padding: 3px 0 0 3px; border-top: 1px solid #bbb; box-shadow: inset 0 -1px #bbb; flex: none; overflow: hidden; }
    .tab { display: flex; align-items: center; gap: 5px; width: 133px; height: 32px; margin-right: 3px; padding: 0 12px; border: 1px solid #bbb; border-bottom-color: #fff; background: #fff; color: #444; font-weight: 700; flex: none; white-space: nowrap; }
    .tab .ic { color: #888; }
    .sq { display: grid; place-items: center; width: 28px; height: 28px; margin: 1px 0 0 6px; border: 1px solid #ccc; background: #fff; color: #888; flex: none; }
    .pressed { background: #efefef; border-bottom: 2px solid #999; color: #666; }
    .bar { display: flex; gap: 10px; height: 42px; padding: 8px 0 0 126px; background: #f3f3f3; border-bottom: 1px solid #ddd; flex: none; overflow: hidden; }
    .bar button { display: flex; align-items: center; gap: 3px; height: 25px; padding: 0 7px; border: 1px solid #ccc; background: #fff; color: #888; white-space: nowrap; flex: none; }
    .caret { border: 4px solid transparent; border-bottom: 0; border-top: 5px solid #888; margin: 0 -3px 0 4px; }
    .msgs { flex: 1; min-height: 0; }
    .foot { height: 27px; border-top: 1px solid #bbb; background: #f3f3f3; flex: none; }
  `];

  render() {
    return html`
      <div class="grip"></div>
      <section class="panel">
        <div class="tabs">
          <button class="tab">${glyph("bug", 13)}调试窗口</button>
          <button class="sq" aria-label="信息">${glyph("info", 13)}</button>
          <button class="sq" aria-label="帮助">${glyph("book", 13)}</button>
          <button class="sq pressed" aria-label="调试">${glyph("bug", 14)}</button>
          <button class="sq" aria-label="配置节点">${glyph("gear", 13)}</button>
        </div>
        <div class="bar">
          <button>${glyph("filter", 11)}所有节点<i class="caret"></i></button>
          <button>${glyph("trash", 11)}all</button>
        </div>
        <div class="msgs"></div>
        <div class="foot"></div>
      </section>`;
  }
}

/* ---------- page ---------- */

@customElement("app-root")
class AppRoot extends LitElement {
  static styles = [shared, css`
    :host { position: relative; display: flex; flex-direction: column; height: 100vh; min-height: 600px; background: #ddd; overflow: hidden; font-family: "Liberation Sans", ${CJK}, sans-serif; }
    browser-bar { flex: none; }
    .page { flex: 1; min-height: 0; display: flex; border-bottom: 1px solid #000; margin-bottom: 2px; }
    .red { flex: 1; min-width: 0; display: flex; flex-direction: column; }
    .head { display: flex; align-items: center; height: 40px; padding: 0 26px 0 18px; background: #4f4f4f; color: #b2b2b2; font-size: 16px; line-height: 24px; flex: none; }
    .logo { margin-right: 5px; }
    .brand { padding-top: 3px; }
    .deploy { display: flex; align-items: center; height: 30px; margin-left: auto; padding: 0 8px 0 12px; border: 0; background: #99555c; color: #ccc; font-size: 14px; }
    .deploy span { margin: 0 19px 0 12px; }
    .caret { border: 4px solid transparent; border-bottom: 0; border-top: 6px solid #ccc; }
    .work { flex: 1; min-height: 0; display: flex; }
    .status { position: absolute; left: 0; bottom: 3px; height: 26px; padding: 0 24px 0 0; border-radius: 0 3px 0 0; background: #ffdd5c; color: #222; font: 15px/26px "Noto Sans", sans-serif; white-space: nowrap; z-index: 3; }
    .grab { position: absolute; left: 3px; bottom: 30px; display: flex; align-items: center; gap: 3px; width: 232px; height: 25px; padding: 0 2px 0 5px; background: linear-gradient(#d8e3f2, #b6c6e2); opacity: .94; }
    .grab button { height: 21px; border: 1px solid #5b6fa3; border-radius: 6px; background: linear-gradient(#dbe6f6, #9fb4dc); color: #2d3d66; font: 700 17px/19px ${CJK}, sans-serif; white-space: nowrap; }
    .grab .go { display: flex; align-items: center; flex: 1; padding: 0 9px; gap: 4px; }
    .grab .sm { width: 14px; height: 15px; border-color: #8898bd; border-radius: 4px; font: 700 13px/13px "Liberation Sans", sans-serif; }
    .stamp { position: absolute; right: 15px; bottom: 6px; color: #8a8a8a; font: 12px/16px "Noto Sans", sans-serif; z-index: 3; }
  `];

  render() {
    return html`
      <browser-bar></browser-bar>
      <div class="page">
        <ha-nav></ha-nav>
        <main class="red">
          <header class="head">
            <svg class="ic logo" width="48" height="20" viewBox="0 0 48 20">
              <path d="M14 9.500c8 0 5-5 12-5M14 9.500c10 0 8 6 20 6" fill="none" stroke="#b9b9b9" stroke-width="1.800"/>
              <g fill="#a86568" stroke="#b9b9b9" stroke-width="1.200"><rect x="1" y="6.500" width="13" height="6" rx="1.500"/><rect x="26" y="1.500" width="13" height="6" rx="1.500"/><rect x="34" y="12.500" width="13" height="6" rx="1.500"/></g>
            </svg>
            <span class="brand">Node-RED</span>
            <button class="deploy">
              <svg class="ic" width="28" height="20" viewBox="0 0 28 20"><g fill="#ccc"><rect y="6" width="10" height="6"/><rect x="17" y="1" width="10" height="5.500"/><rect x="17" y="14" width="10" height="5.500"/></g><path d="M10 9c4 0 3-5.500 7-5.500" fill="none" stroke="#ccc" stroke-width="1.600"/></svg>
              <span>部署</span><i class="caret"></i>
            </button>
          </header>
          <div class="work">
            <node-palette></node-palette>
            <flow-workspace></flow-workspace>
            <edit-tray></edit-tray>
            <debug-panel></debug-panel>
          </div>
        </main>
      </div>
      <div class="grab">
        <button class="go"><svg class="ic" width="16" height="14" viewBox="0 0 16 14"><path d="M1 0l14 7-14 7 3-7z" fill="#2fb344" stroke="#1c8a35"/></svg>从该页面下载 视频</button>
        <button class="sm">?</button><button class="sm">X</button>
      </div>
      <div class="status">homeassistant.local:8123/api/hassio_ingress/nGvac6kfzLSci4BmkG9Q45xwqmQ6lESSpY7SlynvxmE/#editor-tab-flow-properties</div>
      <div class="stamp">CSDN @2345VOR</div>`;
  }
}
